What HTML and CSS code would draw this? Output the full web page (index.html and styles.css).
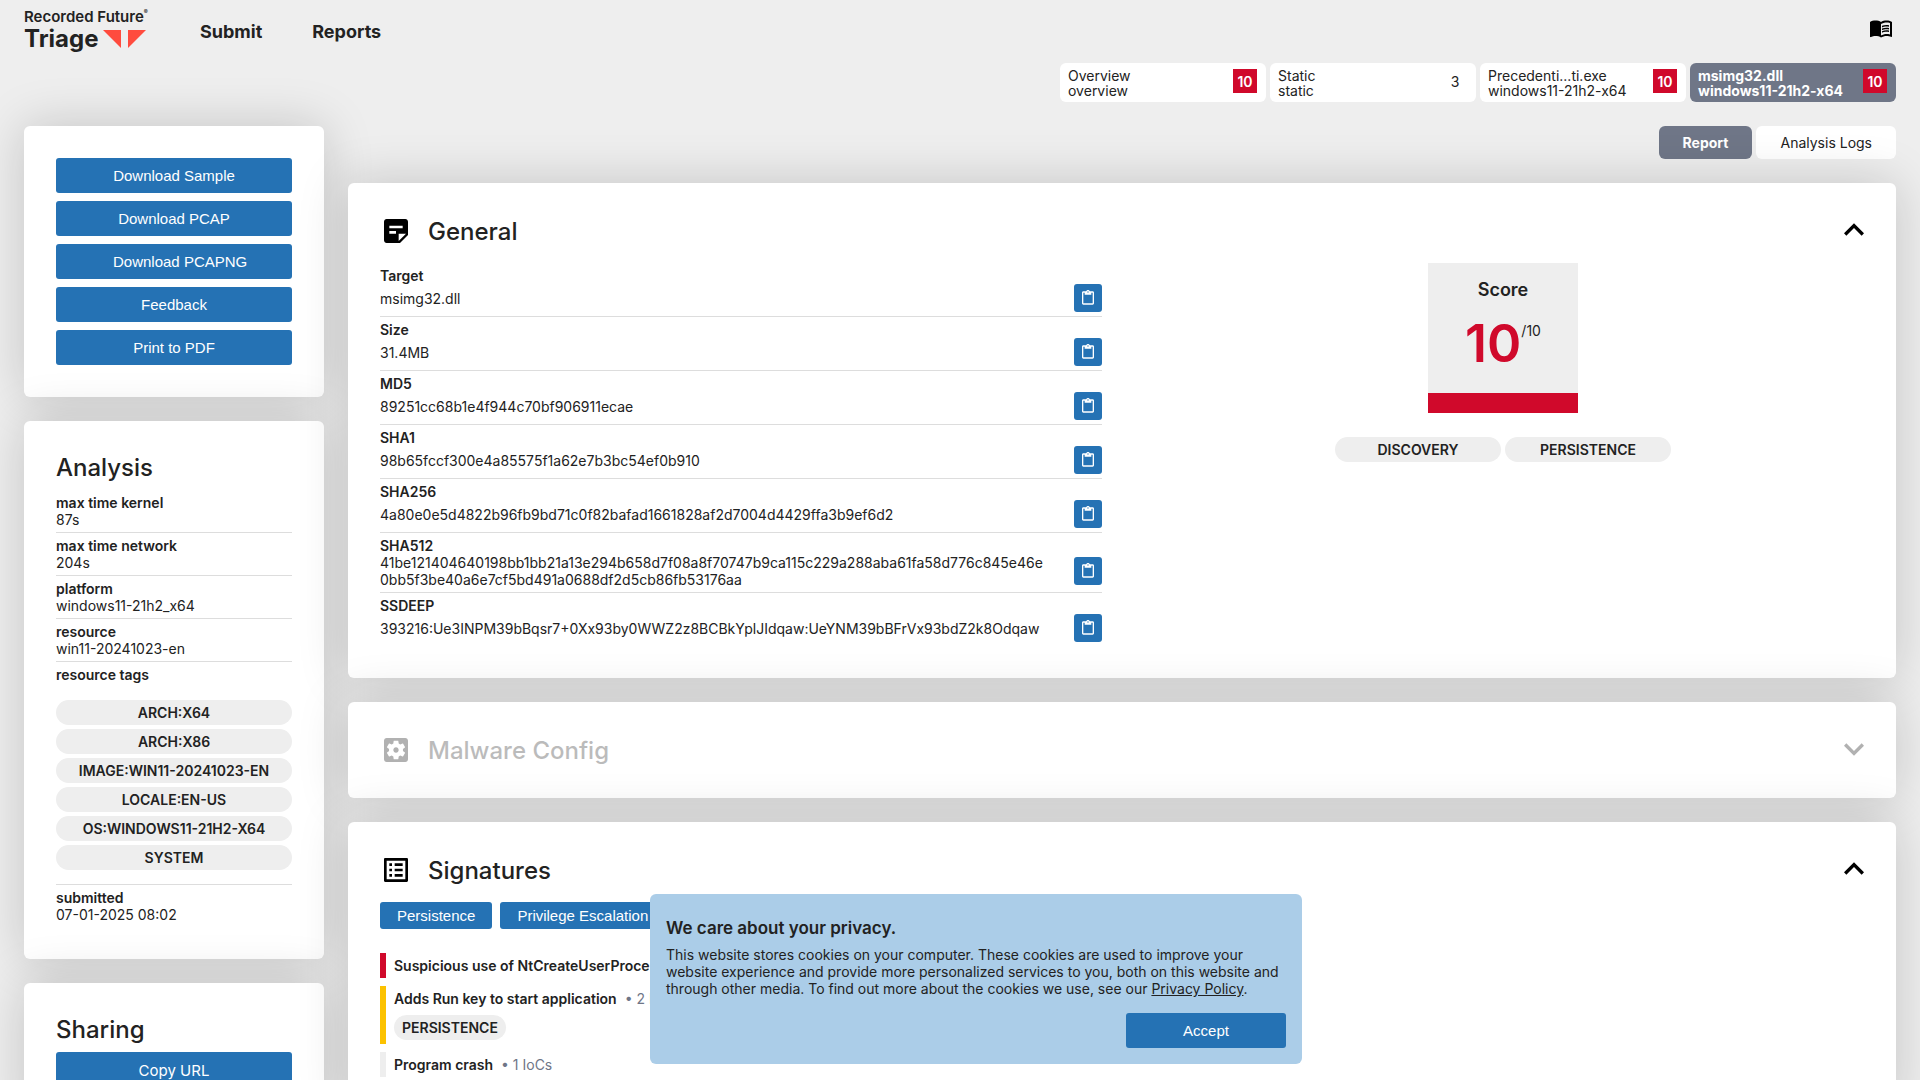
FILE: index.html
```html
<!DOCTYPE html>
<html lang="en">
<head>
<meta charset="utf-8">
<title>msimg32.dll | Triage</title>
<link rel="stylesheet" href="styles.css">
</head>
<body>
<svg class="sprite" aria-hidden="true">
  <symbol id="icon-paste" viewBox="0 0 24 24"><path d="M19 2h-4.180C14.400.840 13.300 0 12 0c-1.300 0-2.400.840-2.820 2H5c-1.100 0-2 .900-2 2v16c0 1.100.900 2 2 2h14c1.100 0 2-.900 2-2V4c0-1.100-.900-2-2-2zm-7 0c.550 0 1 .450 1 1s-.450 1-1 1-1-.450-1-1 .450-1 1-1zm7 18H5V4h2v3h10V4h2v16z"/></symbol>
  <symbol id="icon-up" viewBox="6 6 12 12"><path d="M7.410 15.410L12 10.830l4.590 4.580L18 14l-6-6-6 6z"/></symbol>
  <symbol id="icon-down" viewBox="6 6 12 12"><path d="M7.410 8.590L12 13.170l4.590-4.580L18 10l-6 6-6-6z"/></symbol>
</svg>

<header class="topbar">
  <a class="logo" href="#" aria-label="Recorded Future Triage">
    <span class="logo-company">Recorded Future<span class="logo-reg">®</span></span>
    <span class="logo-product">Triage
      <svg class="logo-mark" viewBox="0 0 43 18" aria-hidden="true"><path d="M0 0h18v18zM25 0h18L25 18z"/></svg>
    </span>
  </a>
  <nav class="menu">
    <a href="#">Submit</a>
    <a href="#">Reports</a>
  </nav>
  <a class="docs" href="#" aria-label="Documentation">
    <svg viewBox="0 0 24 24" width="24" height="24"><path d="M21 5c-1.110-.350-2.330-.500-3.500-.500-1.950 0-4.050.400-5.500 1.500-1.450-1.100-3.550-1.500-5.500-1.500S2.450 4.900 1 6v14.650c0 .250.250.500.500.500.100 0 .150-.050.250-.050C3.100 20.450 5.050 20 6.500 20c1.950 0 4.050.400 5.500 1.500 1.350-.850 3.800-1.500 5.500-1.500 1.650 0 3.350.300 4.750 1.050.100.050.150.050.250.050.250 0 .500-.250.500-.500V6c-.600-.450-1.250-.750-2-1zm0 13.500c-1.100-.350-2.300-.500-3.500-.500-1.700 0-4.150.650-5.500 1.500V8c1.350-.850 3.800-1.500 5.500-1.500 1.200 0 2.400.150 3.500.500v11.500z"/><path d="M17.500 10.500c.880 0 1.730.090 2.500.260V9.240c-.790-.150-1.640-.240-2.500-.240-1.700 0-3.240.290-4.500.830v1.660c1.130-.640 2.700-.990 4.500-.990zM13 12.490v1.660c1.130-.640 2.700-.990 4.500-.990.880 0 1.730.090 2.500.260V11.900c-.790-.150-1.640-.240-2.500-.240-1.700 0-3.240.300-4.500.830zM17.500 14.330c-1.700 0-3.240.290-4.500.830v1.660c1.130-.640 2.700-.990 4.500-.990.880 0 1.730.090 2.500.260v-1.520c-.790-.160-1.640-.240-2.500-.240z"/></svg>
  </a>
</header>

<nav class="tasks">
  <a class="task" href="#"><span class="task-name">Overview<br>overview</span><span class="task-score high">10</span></a>
  <a class="task" href="#"><span class="task-name">Static<br>static</span><span class="task-score">3</span></a>
  <a class="task" href="#"><span class="task-name">Precedenti...ti.exe<br>windows11-21h2-x64</span><span class="task-score high">10</span></a>
  <a class="task active" href="#"><span class="task-name">msimg32.dll<br>windows11-21h2-x64</span><span class="task-score high">10</span></a>
</nav>

<div class="layout">
  <aside class="column">
    <section class="card actions">
      <button class="btn" type="button">Download Sample</button>
      <button class="btn" type="button">Download PCAP</button>
      <button class="btn" type="button">Download PCAPNG</button>
      <button class="btn" type="button">Feedback</button>
      <button class="btn" type="button">Print to PDF</button>
    </section>

    <section class="card">
      <h2>Analysis</h2>
      <dl class="facts">
        <div><dt>max time kernel</dt><dd>87s</dd></div>
        <div><dt>max time network</dt><dd>204s</dd></div>
        <div><dt>platform</dt><dd>windows11-21h2_x64</dd></div>
        <div><dt>resource</dt><dd>win11-20241023-en</dd></div>
        <div><dt>resource tags</dt>
          <dd class="tags">
            <span class="tag">arch:x64</span>
            <span class="tag">arch:x86</span>
            <span class="tag">image:win11-20241023-en</span>
            <span class="tag">locale:en-us</span>
            <span class="tag">os:windows11-21h2-x64</span>
            <span class="tag">system</span>
          </dd>
        </div>
        <div><dt>submitted</dt><dd>07-01-2025 08:02</dd></div>
      </dl>
    </section>

    <section class="card sharing">
      <h2>Sharing</h2>
      <button class="btn" type="button">Copy URL</button>
    </section>
  </aside>

  <main class="column">
    <nav class="views">
      <a class="view active" href="#">Report</a>
      <a class="view" href="#">Analysis Logs</a>
    </nav>

    <section class="card">
      <div class="card-head">
        <svg class="card-icon" viewBox="0 0 24 24" aria-hidden="true"><path d="M19 3H4.990C3.890 3 3 3.900 3 5l.010 14c0 1.100.890 2 1.990 2h10l6-6V5c0-1.100-.900-2-2-2zM7 8h10v2H7V8zm5 6H7v-2h5v2zm2 5.500V14h5.500L14 19.500z"/></svg>
        <h2>General</h2>
        <button class="toggle" type="button" aria-label="Collapse General"><svg><use href="#icon-up"/></svg></button>
      </div>
      <div class="general">
        <dl class="props">
          <div><dt>Target</dt><dd><span>msimg32.dll</span><button class="copy" type="button" aria-label="Copy target"><svg><use href="#icon-paste"/></svg></button></dd></div>
          <div><dt>Size</dt><dd><span>31.4MB</span><button class="copy" type="button" aria-label="Copy size"><svg><use href="#icon-paste"/></svg></button></dd></div>
          <div><dt>MD5</dt><dd><span>89251cc68b1e4f944c70bf906911ecae</span><button class="copy" type="button" aria-label="Copy MD5"><svg><use href="#icon-paste"/></svg></button></dd></div>
          <div><dt>SHA1</dt><dd><span>98b65fccf300e4a85575f1a62e7b3bc54ef0b910</span><button class="copy" type="button" aria-label="Copy SHA1"><svg><use href="#icon-paste"/></svg></button></dd></div>
          <div><dt>SHA256</dt><dd><span>4a80e0e5d4822b96fb9bd71c0f82bafad1661828af2d7004d4429ffa3b9ef6d2</span><button class="copy" type="button" aria-label="Copy SHA256"><svg><use href="#icon-paste"/></svg></button></dd></div>
          <div><dt>SHA512</dt><dd><span>41be121404640198bb1bb21a13e294b658d7f08a8f70747b9ca115c229a288aba61fa58d776c845e46e0bb5f3be40a6e7cf5bd491a0688df2d5cb86fb53176aa</span><button class="copy" type="button" aria-label="Copy SHA512"><svg><use href="#icon-paste"/></svg></button></dd></div>
          <div><dt>SSDEEP</dt><dd><span>393216:Ue3INPM39bBqsr7+0Xx93by0WWZ2z8BCBkYplJIdqaw:UeYNM39bBFrVx93bdZ2k8Odqaw</span><button class="copy" type="button" aria-label="Copy SSDEEP"><svg><use href="#icon-paste"/></svg></button></dd></div>
        </dl>
        <div class="verdict">
          <div class="score">
            <div class="score-label">Score</div>
            <div class="score-value"><strong>10</strong><span>/10</span></div>
          </div>
          <div class="verdict-tags">
            <span class="tag">discovery</span>
            <span class="tag">persistence</span>
          </div>
        </div>
      </div>
    </section>

    <section class="card">
      <div class="card-head collapsed">
        <svg class="card-icon" viewBox="0 0 24 24" aria-hidden="true"><path d="M12 10c-1.100 0-2 .900-2 2s.900 2 2 2 2-.900 2-2-.900-2-2-2zm7-7H5c-1.110 0-2 .900-2 2v14c0 1.100.890 2 2 2h14c1.110 0 2-.900 2-2V5c0-1.100-.890-2-2-2zm-1.750 9c0 .230-.020.460-.050.680l1.480 1.160c.130.110.170.300.080.450l-1.400 2.420c-.090.150-.270.210-.430.150l-1.740-.700c-.360.280-.760.510-1.180.690l-.260 1.850c-.030.170-.180.300-.350.300h-2.800c-.170 0-.320-.130-.350-.290l-.260-1.850c-.430-.180-.820-.410-1.180-.690l-1.740.700c-.160.060-.340 0-.430-.150l-1.400-2.420c-.090-.150-.050-.340.080-.450l1.480-1.160c-.030-.230-.050-.460-.050-.690 0-.230.020-.460.050-.680l-1.480-1.160c-.130-.110-.170-.300-.080-.450l1.400-2.420c.090-.150.270-.210.430-.150l1.740.700c.360-.280.760-.510 1.180-.690l.260-1.850c.030-.170.180-.300.350-.300h2.800c.170 0 .320.130.350.290l.260 1.850c.430.180.820.410 1.180.690l1.740-.700c.160-.060.340 0 .430.150l1.400 2.420c.090.150.050.340-.080.450l-1.480 1.160c.030.230.050.460.050.690z"/></svg>
        <h2>Malware Config</h2>
        <button class="toggle" type="button" aria-label="Expand Malware Config"><svg><use href="#icon-down"/></svg></button>
      </div>
    </section>

    <section class="card">
      <div class="card-head">
        <svg class="card-icon" viewBox="0 0 24 24" aria-hidden="true"><path d="M19 5v14H5V5h14m1.100-2H3.900c-.500 0-.900.400-.900.900v16.200c0 .400.400.900.900.900h16.200c.400 0 .900-.500.900-.900V3.900c0-.500-.500-.900-.900-.900zM11 7h6v2h-6V7zm0 4h6v2h-6v-2zm0 4h6v2h-6zM7 7h2v2H7zm0 4h2v2H7zm0 4h2v2H7z"/></svg>
        <h2>Signatures</h2>
        <button class="toggle" type="button" aria-label="Collapse Signatures"><svg><use href="#icon-up"/></svg></button>
      </div>
      <div class="filters">
        <button class="btn filter" type="button">Persistence</button>
        <button class="btn filter" type="button">Privilege Escalation</button>
      </div>
      <ul class="signatures">
        <li class="severe"><p><b>Suspicious use of NtCreateUserProcess</b></p></li>
        <li class="medium"><p><b>Adds Run key to start application</b><span>• 2 IoCs</span></p><span class="tag">persistence</span></li>
        <li><p><b>Program crash</b><span>• 1 IoCs</span></p></li>
      </ul>
    </section>
  </main>
</div>

<div class="consent" role="dialog" aria-labelledby="consent-title">
  <h3 id="consent-title">We care about your privacy.</h3>
  <p>This website stores cookies on your computer. These cookies are used to improve your website experience and provide more personalized services to you, both on this website and through other media. To find out more about the cookies we use, see our <a href="#">Privacy Policy</a>.</p>
  <button class="btn accept" type="button">Accept</button>
</div>
</body>
</html>
```
FILE: styles.css
```css
* { box-sizing: border-box; }

body {
  margin: 0;
  background: #eee;
  color: #222;
  font: 14px/17px Inter, "Liberation Sans", sans-serif;
}

a { color: inherit; text-decoration: none; }
h2, h3, p, dl, dd, ul { margin: 0; padding: 0; }
button { border: 0; font-family: "Liberation Sans", Arial, sans-serif; cursor: pointer; }
svg { display: block; }
.sprite { display: none; }

/* top bar */
.topbar {
  display: flex;
  align-items: center;
  height: 63px;
  padding: 0 27px 0 24px;
}
.logo { width: 126px; margin-bottom: 4px; }
.logo-company {
  display: flex;
  font-size: 15px;
  font-weight: 600;
  line-height: 18px;
  white-space: nowrap;
}
.logo-reg { font-size: 6px; line-height: 8px; }
.logo-product {
  display: flex;
  align-items: center;
  gap: 4px;
  font-size: 24px;
  font-weight: 700;
  line-height: 26px;
}
.logo-mark { width: 43px; height: 18px; fill: #ff4b3e; }
.menu {
  display: flex;
  gap: 50px;
  margin-left: 50px;
  font-size: 18px;
  font-weight: 700;
  line-height: 22px;
}
.docs { margin: 0 0 8px auto; }

/* task tabs */
.tasks {
  display: flex;
  justify-content: flex-end;
  gap: 4px;
  padding: 0 24px;
}
.task {
  display: flex;
  justify-content: space-between;
  width: 206px;
  padding: 5px 9px 4px 8px;
  border-radius: 6px;
  background: #fff;
  line-height: 15px;
}
.task-score {
  width: 24px;
  height: 24px;
  margin-top: 1px;
  line-height: 26px;
  text-align: center;
}
.task-score.high { background: #d0092b; color: #fff; font-weight: 600; }
.task.active, .view.active { background: #6f7687; color: #fff; font-weight: 700; }

/* page columns */
.layout {
  display: grid;
  grid-template-columns: 300px minmax(0, 1fr);
  align-items: start;
  gap: 24px;
  padding: 24px;
}
.column { display: flex; flex-direction: column; gap: 24px; }
.card {
  padding: 32px;
  border-radius: 6px;
  background: #fff;
  box-shadow: 0 0 50px rgba(0, 0, 0, .18);
}
h2 { font-size: 24px; font-weight: 500; line-height: 29px; }

.btn {
  padding: 9px 16px;
  border-radius: 3px;
  background: #2572b4;
  color: #fff;
  font-size: 15px;
  line-height: 17px;
  white-space: nowrap;
}
.actions { display: grid; gap: 8px; }
.actions .btn { min-width: 0; padding: 9px 57px; }
.sharing { display: grid; gap: 8px; }
.sharing .btn { padding: 10px 16px; font-family: inherit; }

.facts { margin-top: 8px; }
.facts > div, .props > div { padding: 4px 0; border-bottom: 1px solid #ddd; }
.facts > div:last-child, .props > div:last-child { border-bottom: 0; }
dt { font-weight: 600; }
.tags { display: grid; gap: 4px; padding: 17px 0 10px; }
.tag {
  padding: 4px 8px;
  border-radius: 13px;
  background: #eee;
  font-weight: 600;
  text-align: center;
  text-transform: uppercase;
}

/* report views */
.views { display: flex; justify-content: flex-end; gap: 4px; }
.view { padding: 8px 24px; border-radius: 6px; background: #fff; }

/* card header */
.card-head { display: flex; align-items: center; gap: 16px; }
.card-head.collapsed { opacity: .3; }
.card-icon { width: 32px; height: 32px; }
.toggle { margin-left: auto; padding: 0 0 2px; background: none; }
.toggle svg { width: 20px; height: 20px; }

/* general */
.general {
  display: grid;
  grid-template-columns: 1fr 1fr;
  gap: 40px;
  margin-top: 16px;
}
.props dd { display: flex; align-items: center; gap: 24px; }
.props dd span { flex: 1; word-break: break-all; }
.copy { padding: 6px; border-radius: 3px; background: #2572b4; }
.copy svg { width: 16px; height: 16px; fill: #fff; }

.verdict { display: flex; flex-direction: column; align-items: center; gap: 24px; }
.score {
  width: 150px;
  height: 150px;
  padding-top: 16px;
  border-bottom: 20px solid #d0092b;
  background: #eee;
}
.score-label { font-size: 18px; font-weight: 600; line-height: 22px; text-align: center; }
.score-value { display: flex; justify-content: center; margin-top: 11px; }
.score-value strong { color: #d0092b; font-size: 52px; font-weight: 600; line-height: 63px; }
.score-value span { padding-top: 10px; }
.verdict-tags { display: grid; grid-template-columns: 166px 166px; gap: 4px; }

/* signatures */
.filters { display: flex; gap: 8px; margin-top: 16px; }
.filter { padding: 5px 17px; }
.signatures { display: grid; gap: 8px; margin-top: 24px; list-style: none; }
.signatures li { padding-left: 8px; border-left: 6px solid #eee; }
.signatures .severe { border-color: #d0092b; }
.signatures .medium { padding-bottom: 4px; border-color: #fcc200; }
.signatures p { display: flex; gap: 8px; padding: 4px 0; }
.signatures b { font-weight: 600; }
.signatures p span { color: #6f7687; }
.signatures .tag { display: inline-block; margin-top: 4px; vertical-align: top; }

/* cookie notice */
.consent {
  position: fixed;
  bottom: 16px;
  left: calc(50% - 310px);
  display: grid;
  width: 652px;
  padding: 24px 16px 16px;
  border-radius: 6px;
  background: #abcde8;
}
.consent h3 { font-size: 17px; font-weight: 600; line-height: 20px; }
.consent p { margin: 8px 0 16px; }
.consent p a { text-decoration: underline; }
.accept { width: 160px; justify-self: end; }
```
